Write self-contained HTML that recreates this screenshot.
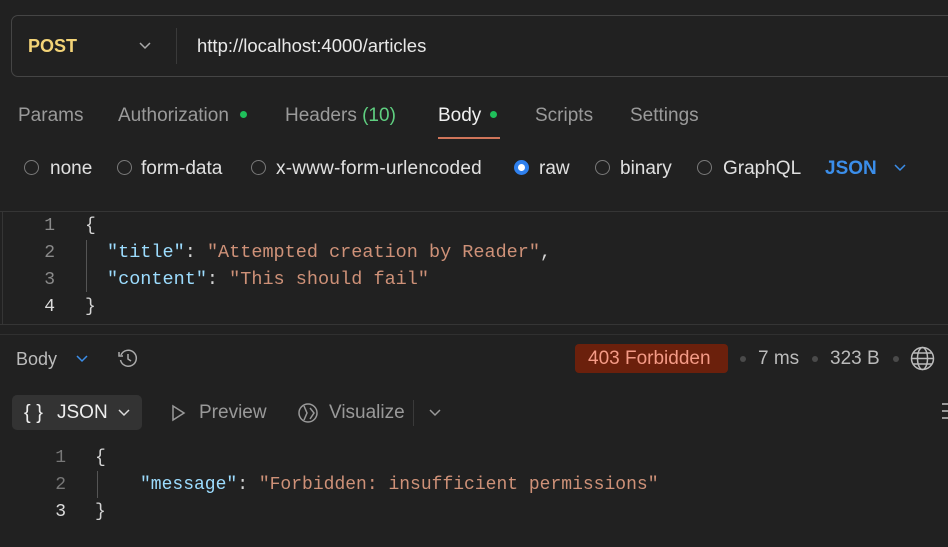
<!DOCTYPE html>
<html><head><meta charset="utf-8"><style>
*{margin:0;padding:0;box-sizing:border-box}
body{width:948px;height:547px;background:#212121;overflow:hidden;position:relative;font-family:"Liberation Sans",sans-serif;color:#cfcfcf;font-size:19px;line-height:24px}
.a{position:absolute;white-space:nowrap}
.m{font-family:"Liberation Mono",monospace;font-size:18px}
.t{font-size:18.5px}
.num{color:#8a8a8a;text-align:right;width:20px}
.k{color:#9cdcfe}.s{color:#ce9178}.p{color:#d4d4d4}
.rad{position:absolute;width:15px;height:15px;border:1.5px solid #7a7a7a;border-radius:50%}
.dot{position:absolute;width:7px;height:7px;border-radius:50%;background:#1fbf5a}
.g{position:absolute;width:6px;height:6px;border-radius:50%;background:#4a4a4a}
</style></head><body>
<div class="a" style="left:11px;top:15px;width:960px;height:62px;border:1px solid #454545;border-radius:7px"></div>
<div class="a" style="left:176px;top:28px;width:1px;height:36px;background:#3a3a3a"></div>
<div class="a" style="left:28px;top:34px;color:#f2d377;font-weight:bold;font-size:18px">POST</div>
<svg class="a" style="left:138px;top:41px" width="14" height="10"><path d="M2 2l5 5 5-5" stroke="#aaa" stroke-width="1.5" fill="none"/></svg>
<div class="a" style="left:197px;top:34px;color:#e8e8e8;font-size:18.5px">http://localhost:4000/articles</div>

<div class="a" style="left:18px;top:104px;color:#9a9a9a">Params</div>
<div class="a" style="left:118px;top:104px;color:#9a9a9a">Authorization</div>
<div class="dot" style="left:240px;top:111px"></div>
<div class="a" style="left:285px;top:104px;color:#9a9a9a">Headers <span style="color:#5fcf80">(10)</span></div>
<div class="a" style="left:438px;top:104px;color:#f0f0f0">Body</div>
<div class="dot" style="left:490px;top:111px"></div>
<div class="a" style="left:438px;top:137px;width:62px;height:2px;background:#d0755a"></div>
<div class="a" style="left:535px;top:104px;color:#9a9a9a">Scripts</div>
<div class="a" style="left:630px;top:104px;color:#9a9a9a">Settings</div>

<div class="rad" style="left:24px;top:160px"></div><div class="a" style="left:50px;top:157px;color:#e0e0e0">none</div>
<div class="rad" style="left:117px;top:160px"></div><div class="a" style="left:141px;top:157px;color:#e0e0e0">form-data</div>
<div class="rad" style="left:251px;top:160px"></div><div class="a" style="left:276px;top:157px;color:#e0e0e0;letter-spacing:0.2px">x-www-form-urlencoded</div>
<div class="rad" style="left:514px;top:160px;border:4.5px solid #2f80ed;background:#fff"></div><div class="a" style="left:539px;top:157px;color:#e0e0e0">raw</div>
<div class="rad" style="left:595px;top:160px"></div><div class="a" style="left:620px;top:157px;color:#e0e0e0">binary</div>
<div class="rad" style="left:697px;top:160px"></div><div class="a" style="left:723px;top:157px;color:#e0e0e0">GraphQL</div>
<div class="a" style="left:825px;top:157px;color:#3b8eea;font-weight:bold">JSON</div>
<svg class="a" style="left:893px;top:163px" width="14" height="10"><path d="M2 2l5 5 5-5" stroke="#3b8eea" stroke-width="1.5" fill="none"/></svg>

<div class="a" style="left:0;top:211px;width:948px;height:1px;background:#353535"></div>
<div class="a" style="left:2px;top:212px;width:1px;height:112px;background:#353535"></div>
<div class="a" style="left:0;top:324px;width:948px;height:1px;background:#353535"></div>
<div class="a" style="left:0;top:334px;width:948px;height:1px;background:#303030"></div>
<div class="a" style="left:86px;top:240px;width:1px;height:52px;background:#555"></div>
<div class="a m num" style="left:35px;top:214px">1</div><div class="a m p" style="left:85px;top:214px">{</div>
<div class="a m num" style="left:35px;top:241px">2</div><div class="a m t" style="left:107px;top:241px"><span class="k">"title"</span><span class="p">: </span><span class="s">"Attempted creation by Reader"</span><span class="p">,</span></div>
<div class="a m num" style="left:35px;top:268px">3</div><div class="a m t" style="left:107px;top:268px"><span class="k">"content"</span><span class="p">: </span><span class="s">"This should fail"</span></div>
<div class="a m num" style="left:35px;top:295px;color:#ddd">4</div><div class="a m p" style="left:85px;top:295px">}</div>

<div class="a" style="left:16px;top:347px;color:#bbb;font-size:18px">Body</div>
<svg class="a" style="left:75px;top:354px" width="14" height="10"><path d="M2 2l5 5 5-5" stroke="#3b8eea" stroke-width="1.5" fill="none"/></svg>
<svg class="a" style="left:116px;top:346px" width="24" height="24" fill="none" stroke="#aaa" stroke-width="1.5"><path d="M5 9a8 8 0 1 1 -0.5 5"/><path d="M3 6v4h4"/><path d="M12 8v5l3 2"/></svg>
<div class="a" style="left:575px;top:344px;width:153px;height:29px;background:#6b200c;border-radius:4px"></div>
<div class="a" style="left:588px;top:347px;color:#f49a86">403 Forbidden</div>
<div class="g" style="left:740px;top:356px"></div>
<div class="a" style="left:758px;top:347px;color:#bbb">7 ms</div>
<div class="g" style="left:812px;top:356px"></div>
<div class="a" style="left:830px;top:347px;color:#bbb">323 B</div>
<div class="g" style="left:893px;top:356px"></div>
<svg class="a" style="left:910px;top:346px" width="25" height="25" fill="none" stroke="#bbb" stroke-width="1.5"><circle cx="12.5" cy="12.5" r="11"/><ellipse cx="12.5" cy="12.5" rx="5" ry="11"/><path d="M1.5 12.5h22M3.5 7h18M3.5 18h18"/></svg>

<div class="a" style="left:12px;top:395px;width:130px;height:35px;background:#333;border-radius:5px"></div>
<div class="a" style="left:24px;top:401px;color:#eee;font-size:20px">{ }</div>
<div class="a" style="left:57px;top:401px;color:#eee">JSON</div>
<svg class="a" style="left:117px;top:408px" width="14" height="10"><path d="M2 2l5 5 5-5" stroke="#ddd" stroke-width="1.5" fill="none"/></svg>
<svg class="a" style="left:170px;top:403px" width="16" height="20" fill="none" stroke="#999" stroke-width="1.5"><path d="M3 3l11 7-11 7z"/></svg>
<div class="a" style="left:199px;top:401px;color:#999">Preview</div>
<svg class="a" style="left:296px;top:400px" width="24" height="24" fill="none" stroke="#999" stroke-width="1.5"><circle cx="12" cy="13" r="9"/><path d="M8 6l3 7-3 7M14 8l4 5-4 6"/></svg>
<div class="a" style="left:329px;top:401px;color:#999">Visualize</div>
<div class="a" style="left:413px;top:400px;width:1px;height:26px;background:#3a3a3a"></div>
<svg class="a" style="left:428px;top:408px" width="14" height="10"><path d="M2 2l5 5 5-5" stroke="#999" stroke-width="1.5" fill="none"/></svg>
<div class="a" style="left:942px;top:403px;width:8px;height:2px;background:#999;box-shadow:0 7px 0 #999,0 14px 0 #999"></div>

<div class="a" style="left:97px;top:471px;width:1px;height:27px;background:#555"></div>
<div class="a m num" style="left:46px;top:446px;color:#777">1</div><div class="a m p" style="left:95px;top:446px">{</div>
<div class="a m num" style="left:46px;top:473px;color:#777">2</div><div class="a m" style="left:140px;top:473px"><span class="k">"message"</span><span class="p">: </span><span class="s">"Forbidden: insufficient permissions"</span></div>
<div class="a m num" style="left:46px;top:500px;color:#ddd">3</div><div class="a m p" style="left:95px;top:500px">}</div>
</body></html>
